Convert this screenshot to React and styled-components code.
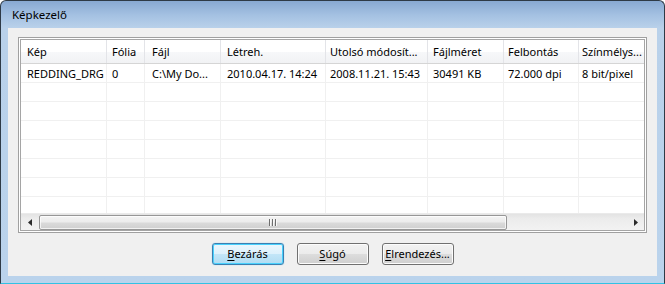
import React from "react";
import styled, { createGlobalStyle } from "styled-components";

const Global = createGlobalStyle`
  html, body { margin: 0; padding: 0; background: #ffffff; }
  body { font-family: "Segoe UI", "Noto Sans", "Open Sans", sans-serif; font-size: 11px; color: #000; }
  * { box-sizing: border-box; }
`;

const Window = styled.div`
  width: 665px;
  height: 284px;
  border: 1px solid #2e3a46;
  border-bottom-color: #31c2e4;
  border-radius: 6px 6px 0 0;
  background: linear-gradient(to bottom, #88a9d2 0px, #a4c1e2 14px, #b9d1ea 27px, #bad3ec 100%);
  display: flex;
  flex-direction: column;
  overflow: hidden;
`;

const TitleBar = styled.div`
  height: 27px;
  flex-shrink: 0;
  padding: 6px 0 0 11px;
  line-height: 16px;
  font-size: 11.5px;
  color: #000;
`;

const Client = styled.div`
  margin: 0 7px 7px 7px;
  height: 248px;
  background: #f0f0f0;
  padding: 9px 10px 0 10px;
  display: flex;
  flex-direction: column;
`;

const ListFrame = styled.div`
  height: 196px;
  border: 1px solid #a0a0a0;
  padding: 1px;
  background: #ffffff;
`;

const ListInner = styled.div`
  height: 100%;
  border: 1px solid #a5a5a5;
  background: #ffffff;
  display: flex;
  flex-direction: column;
  overflow: hidden;
`;

const HeaderRow = styled.div`
  height: 24px;
  flex-shrink: 0;
  display: flex;
  border-bottom: 1px solid #d5d5d5;
  background: linear-gradient(to bottom, #ffffff 0%, #ffffff 50%, #f7f8fa 50%, #f1f2f4 100%);
`;

const HeaderCell = styled.div`
  width: ${(p) => p.$w}px;
  flex-shrink: 0;
  border-right: 1px solid #e3e4e8;
  padding-left: ${(p) => p.$pad}px;
  line-height: 23px;
  white-space: nowrap;
  overflow: hidden;
  color: #000;
`;

const Body = styled.div`
  flex: 1;
  overflow: hidden;
`;

const Row = styled.div`
  display: flex;
  height: 19px;
  border-bottom: 1px solid #f0f0f0;
`;

const Cell = styled.div`
  width: ${(p) => p.$w}px;
  flex-shrink: 0;
  border-right: 1px solid #f0f0f0;
  padding-left: ${(p) => p.$pad}px;
  line-height: 19px;
  white-space: nowrap;
  overflow: hidden;
`;

const ScrollBar = styled.div`
  height: 17px;
  flex-shrink: 0;
  display: flex;
  align-items: center;
  background: linear-gradient(to bottom, #e3e3e3 0%, #ececec 30%, #f2f2f2 100%);
  border-top: 1px solid #eaeaea;
`;

const ArrowBtn = styled.div`
  width: 17px;
  height: 100%;
  flex-shrink: 0;
  display: flex;
  align-items: center;
  justify-content: center;
`;

const Track = styled.div`
  flex: 1;
  height: 100%;
  display: flex;
  align-items: center;
`;

const Thumb = styled.div`
  width: 468px;
  height: 15px;
  margin-left: 1px;
  border: 1px solid #979797;
  border-radius: 2px;
  background: linear-gradient(to bottom, #f4f4f4 0%, #ececec 45%, #dadada 55%, #cfcfcf 100%);
  box-shadow: inset 0 0 0 1px rgba(255, 255, 255, 0.7);
  display: flex;
  align-items: center;
  justify-content: center;
`;

const Grip = styled.div`
  display: flex;
  gap: 1px;
`;

const GripLine = styled.div`
  width: 2px;
  height: 7px;
  background: linear-gradient(to right, #6e6e6e 50%, #f8f8f8 50%);
`;

const ButtonRow = styled.div`
  margin-top: 10px;
  display: flex;
  justify-content: center;
  gap: 13px;
`;

const Button = styled.div`
  width: 72px;
  height: 22px;
  border: 1px solid ${(p) => (p.$default ? "#3c7fb1" : "#707070")};
  border-radius: 3px;
  background: ${(p) =>
    p.$default
      ? "linear-gradient(to bottom, #ecf7fd 0%, #dcf1fc 50%, #c3e6f8 50%, #b0dcf3 100%)"
      : "linear-gradient(to bottom, #f2f2f2 0%, #ebebeb 50%, #dddddd 50%, #cfcfcf 100%)"};
  box-shadow: ${(p) =>
    p.$default
      ? "inset 0 0 0 1px #48d1fd, 0 0 1px #62c7f2"
      : "inset 0 0 0 1px #fcfcfc"};
  text-align: center;
  line-height: 19px;
  color: #000;
`;

const U = styled.span`
  text-decoration: underline;
  text-underline-offset: 2px;
`;

const cols = [
  { t: "Kép", v: "REDDING_DRG", w: 86, p: 6 },
  { t: "Fólia", v: "0", w: 38, p: 5 },
  { t: "Fájl", v: "C:\\My Do...", w: 76, p: 7 },
  { t: "Létreh.", v: "2010.04.17. 14:24", w: 105, p: 6 },
  { t: "Utolsó módosít...", v: "2008.11.21. 15:43", w: 102, p: 4 },
  { t: "Fájlméret", v: "30491 KB", w: 76, p: 5 },
  { t: "Felbontás", v: "72.000 dpi", w: 75, p: 4 },
  { t: "Színmélys...", v: "8 bit/pixel", w: 110, p: 3 },
];

const LeftArrow = () => (
  <svg width="4" height="7" viewBox="0 0 4 7">
    <polygon points="4,0 0,3.5 4,7" fill="#2b2b2b" />
  </svg>
);

const RightArrow = () => (
  <svg width="4" height="7" viewBox="0 0 4 7">
    <polygon points="0,0 4,3.5 0,7" fill="#2b2b2b" />
  </svg>
);

export default function App() {
  const emptyRows = Array.from({ length: 7 });
  return (
    <>
      <Global />
      <Window>
        <TitleBar>Képkezelő</TitleBar>
        <Client>
          <ListFrame>
            <ListInner>
              <HeaderRow>
                {cols.map((c) => (
                  <HeaderCell key={c.t} $w={c.w} $pad={c.p}>
                    {c.t}
                  </HeaderCell>
                ))}
              </HeaderRow>
              <Body>
                <Row>
                  {cols.map((c) => (
                    <Cell key={c.t} $w={c.w} $pad={c.p}>
                      {c.v}
                    </Cell>
                  ))}
                </Row>
                {emptyRows.map((_, i) => (
                  <Row key={i}>
                    {cols.map((c) => (
                      <Cell key={c.t} $w={c.w} $pad={c.p} />
                    ))}
                  </Row>
                ))}
              </Body>
              <ScrollBar>
                <ArrowBtn>
                  <LeftArrow />
                </ArrowBtn>
                <Track>
                  <Thumb>
                    <Grip>
                      <GripLine />
                      <GripLine />
                      <GripLine />
                    </Grip>
                  </Thumb>
                </Track>
                <ArrowBtn>
                  <RightArrow />
                </ArrowBtn>
              </ScrollBar>
            </ListInner>
          </ListFrame>
          <ButtonRow>
            <Button $default>
              <U>B</U>ezárás
            </Button>
            <Button>
              <U>S</U>úgó
            </Button>
            <Button>
              <U>E</U>lrendezés...
            </Button>
          </ButtonRow>
        </Client>
      </Window>
    </>
  );
}
